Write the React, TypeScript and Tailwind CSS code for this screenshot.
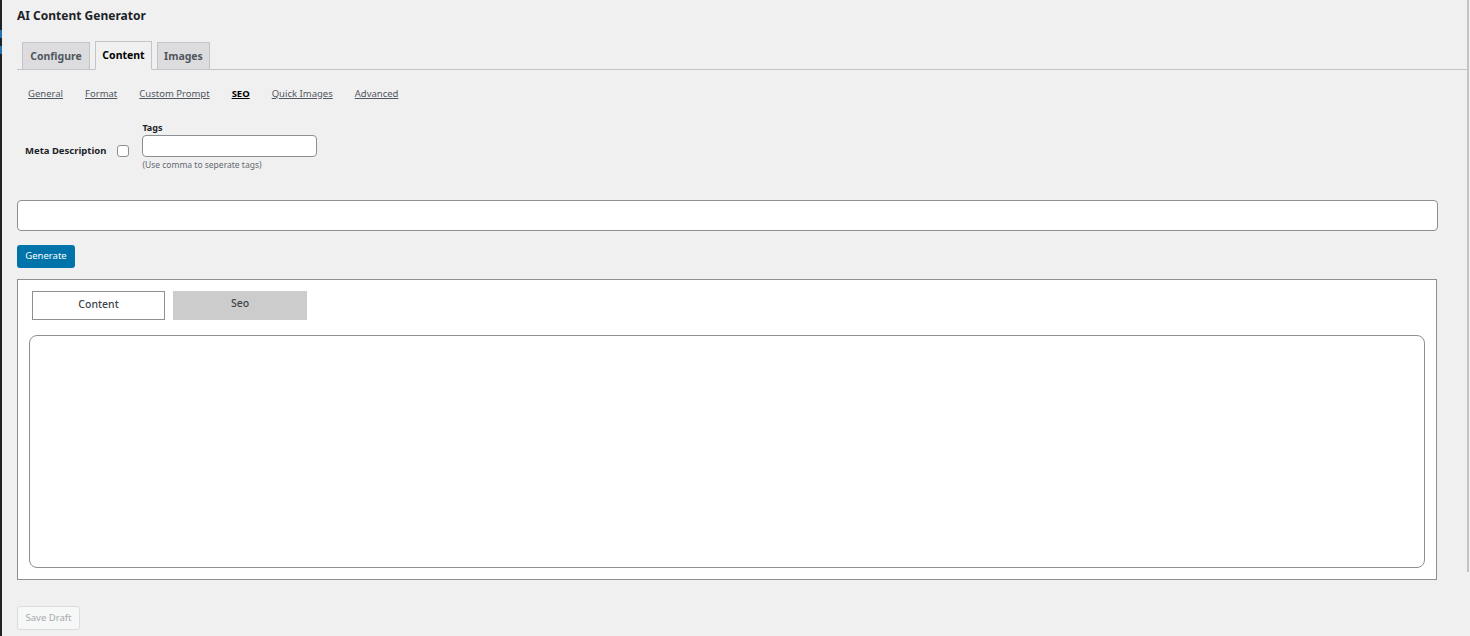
export default function App() {
  const subTabs = ["General", "Format", "Custom Prompt", "SEO", "Quick Images", "Advanced"];

  return (
    <div className="flex h-[636px] w-full overflow-hidden bg-[#f0f0f1] font-['Noto_Sans',sans-serif] text-[#3c434a]">
      {/* admin sidebar edge */}
      <div className="flex w-[2px] shrink-0 flex-col bg-[#1d2327]">
        <div className="mt-[30px] h-[8px] bg-[#2271b1]" />
        <div className="mt-[8px] h-[8px] bg-[#2271b1]" />
      </div>

      <div className="flex min-w-0 flex-1 flex-col pl-[15px]">
        <h1 className="mt-[6px] h-[20px] shrink-0 text-[12px] leading-[20px] font-bold text-[#1d2327]">
          AI Content Generator
        </h1>

        {/* main tabs */}
        <div className="mt-[15px] flex shrink-0 items-end gap-[5px] border-b border-[#c3c4c7] pl-[5px]">
          <button className="-mb-px h-[28px] w-[68px] border border-[#c3c4c7] bg-[#dcdcde] pt-[2px] text-[10.5px] font-bold text-[#50575e]">
            Configure
          </button>
          <button className="-mb-px h-[29px] w-[57px] border border-[#c3c4c7] border-b-[#f0f0f1] bg-[#f0f0f1] pt-[1px] text-[10.5px] font-bold text-black">
            Content
          </button>
          <button className="-mb-px h-[28px] w-[53px] border border-[#c3c4c7] bg-[#dcdcde] pt-[2px] text-[10.5px] font-bold text-[#50575e]">
            Images
          </button>
        </div>

        {/* sub navigation */}
        <div className="mt-[17px] flex shrink-0 gap-[22px] pl-[11px] text-[9.5px] leading-[14px]">
          {subTabs.map((t) => (
            <a
              key={t}
              href="#"
              className={
                t === "SEO"
                  ? "font-bold text-black underline"
                  : "text-[#50575e] underline"
              }
            >
              {t}
            </a>
          ))}
        </div>

        {/* seo options */}
        <div className="mt-[19px] flex shrink-0 items-start pl-[8px]">
          <div className="mt-[24px] flex items-center">
            <span className="text-[9.5px] font-bold text-[#1d2327]">Meta Description</span>
            <span className="ml-[11px] h-[12px] w-[12px] rounded-[3px] border border-[#8c8f94] bg-white" />
          </div>
          <div className="ml-[13px] flex flex-col">
            <span className="mt-[2px] text-[9px] leading-[12px] font-bold text-[#1d2327]">Tags</span>
            <input className="mt-[1px] h-[22px] w-[175px] rounded-[4px] border border-[#8c8f94] bg-white" />
            <span className="mt-[2px] text-[8.5px] leading-[12px] text-[#646970]">
              (Use comma to seperate tags)
            </span>
          </div>
        </div>

        <div className="shrink-0 pr-[29px]">
          <input className="mt-[29px] h-[31px] w-full rounded-[4px] border border-[#8c8f94] bg-white" />
        </div>

        <div className="mt-[10px] shrink-0">
          <button className="h-[23px] w-[58px] rounded-[3px] bg-[#0073aa] text-[9.5px] text-white">
            Generate
          </button>
        </div>

        {/* output box */}
        <div className="mt-[11px] mr-[30px] flex h-[301px] shrink-0 flex-col border border-[#8c8f94] bg-white px-[11px] pt-[11px] pb-[11px]">
          <div className="flex gap-[8px] pl-[3px]">
            <button className="h-[29px] w-[133px] border border-[#8c8f94] bg-white text-[10.5px] font-medium text-[#3c434a]">
              Content
            </button>
            <button className="h-[29px] w-[134px] bg-[#cccccc] pb-[3px] text-[10.5px] font-medium text-[#3c434a]">
              Seo
            </button>
          </div>
          <div className="mt-[15px] flex-1 rounded-[8px] border border-[#8c8f94] bg-white" />
        </div>

        <div className="mt-[23px] shrink-0">
          <button className="h-[24px] w-[63px] rounded-[3px] border border-[#dcdcde] bg-[#f6f7f7] text-[9.5px] text-[#a7aaad]">
            Save Draft
          </button>
        </div>
      </div>

      {/* scrollbar edge */}
      <div className="flex w-[3px] shrink-0 flex-col">
        <div className="h-[572px] w-[2px] bg-[#c3c4c7]" />
      </div>
    </div>
  );
}
